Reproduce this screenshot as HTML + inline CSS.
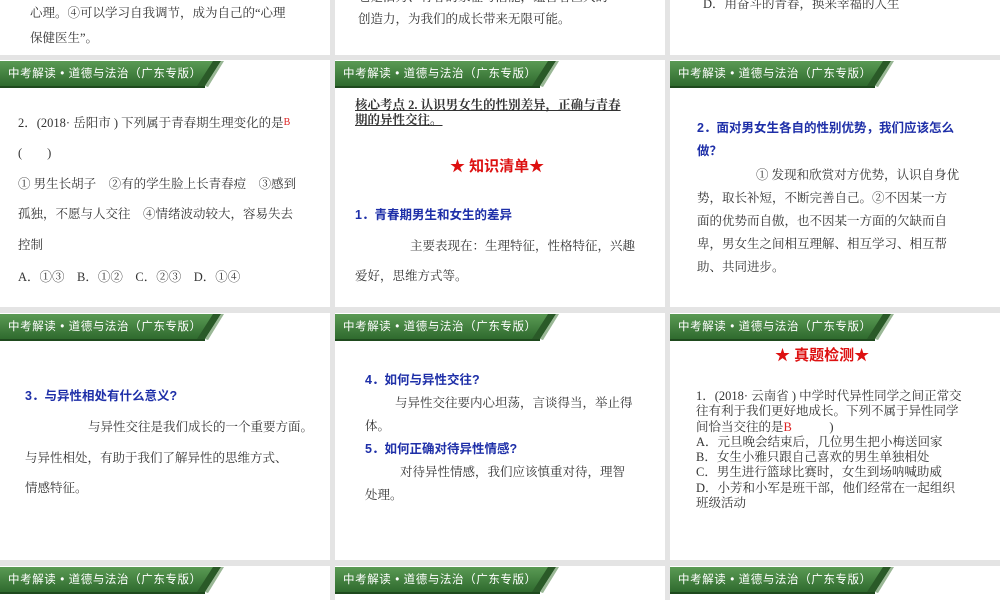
<!DOCTYPE html><html><head><meta charset="utf-8"><style>
body{margin:0;width:1000px;height:600px;background:#e4e4e4;position:relative;overflow:hidden;font-family:"Liberation Serif","Noto Serif CJK SC",serif;color:#333}
.s{position:absolute;background:#fff;width:330px;overflow:hidden}
.t{position:absolute;white-space:nowrap;font-size:12.5px;line-height:16px}
.b{color:#1e2fa8;font-weight:bold;font-family:"Liberation Sans","Noto Sans CJK SC",sans-serif}
.r{color:#d11;font-weight:bold;font-size:15px;font-family:"Liberation Sans","Noto Sans CJK SC",sans-serif}
.bn{position:absolute;left:0;top:1px}
.bt{position:absolute;left:8px;top:5px;color:#fff;font-size:11.5px;white-space:nowrap;letter-spacing:.6px;font-family:"Liberation Sans","Noto Sans CJK SC",sans-serif}
</style></head><body>
<div class="s" style="left:0;top:0;height:55px">
<div class="t" style="left:30px;top:5px">心理。④可以学习自我调节，成为自己的“心理</div>
<div class="t" style="left:30px;top:30px">保健医生”。</div></div>
<div class="s" style="left:335px;top:0;height:55px">
<div class="t" style="left:23px;top:-11px">它是活力、青春的象征与潜能，蕴含着巨大的</div>
<div class="t" style="left:23px;top:11px">创造力，为我们的成长带来无限可能。</div></div>
<div class="s" style="left:670px;top:0;height:55px">
<div class="t" style="left:33px;top:-4px">D．用奋斗的青春，换来幸福的人生</div></div>

<div class="s" style="left:0;top:60px;height:247px">
<div class="t" style="left:18px;top:55px">2．(2018· 岳阳市 ) 下列属于青春期生理变化的是<span style="color:#d22;font-size:10px;vertical-align:top">B</span></div>
<div class="t" style="left:18px;top:85px">(　　)</div>
<div class="t" style="left:18px;top:116px">① 男生长胡子　②有的学生脸上长青春痘　③感到</div>
<div class="t" style="left:18px;top:146px">孤独，不愿与人交往　④情绪波动较大，容易失去</div>
<div class="t" style="left:18px;top:177px">控制</div>
<div class="t" style="left:18px;top:209px">A．①③　B．①②　C．②③　D．①④</div></div>
<div class="s" style="left:335px;top:60px;height:247px">
<div class="t" style="left:20px;top:38px;font-weight:bold;text-decoration:underline;line-height:15px;font-size:12.5px">核心考点 2. 认识男女生的性别差异，正确与青春<br>期的异性交往。</div>
<div class="t r" style="left:115px;top:99px">★ 知识清单★</div>
<div class="t b" style="left:20px;top:147px">1．青春期男生和女生的差异</div>
<div class="t" style="left:75px;top:178px">主要表现在：生理特征，性格特征，兴趣</div>
<div class="t" style="left:20px;top:208px">爱好，思维方式等。</div></div>
<div class="s" style="left:670px;top:60px;height:247px">
<div class="t b" style="left:27px;top:60px">2．面对男女生各自的性别优势，我们应该怎么</div>
<div class="t b" style="left:27px;top:83px">做？</div>
<div class="t" style="left:86px;top:107px">① 发现和欣赏对方优势，认识自身优</div>
<div class="t" style="left:27px;top:130px">势，取长补短，不断完善自己。②不因某一方</div>
<div class="t" style="left:27px;top:153px">面的优势而自傲，也不因某一方面的欠缺而自</div>
<div class="t" style="left:27px;top:176px">卑，男女生之间相互理解、相互学习、相互帮</div>
<div class="t" style="left:27px;top:199px">助、共同进步。</div></div>

<div class="s" style="left:0;top:313px;height:247px">
<div class="t b" style="left:25px;top:75px">3．与异性相处有什么意义?</div>
<div class="t" style="left:88px;top:106px">与异性交往是我们成长的一个重要方面。</div>
<div class="t" style="left:25px;top:137px">与异性相处，有助于我们了解异性的思维方式、</div>
<div class="t" style="left:25px;top:167px">情感特征。</div></div>
<div class="s" style="left:335px;top:313px;height:247px">
<div class="t b" style="left:30px;top:59px">4．如何与异性交往?</div>
<div class="t" style="left:60px;top:82px">与异性交往要内心坦荡，言谈得当，举止得</div>
<div class="t" style="left:30px;top:105px">体。</div>
<div class="t b" style="left:30px;top:128px">5．如何正确对待异性情感?</div>
<div class="t" style="left:65px;top:151px">对待异性情感，我们应该慎重对待，理智</div>
<div class="t" style="left:30px;top:174px">处理。</div></div>
<div class="s" style="left:670px;top:313px;height:247px">
<div class="t r" style="left:105px;top:35px">★ 真题检测★</div>
<div class="t" style="left:26px;top:76px;font-size:12.5px;line-height:15.3px">1．(2018· 云南省 ) 中学时代异性同学之间正常交<br>往有利于我们更好地成长。下列不属于异性同学<br>间恰当交往的是<span style="color:#d22">B</span>　　　)<br>A．元旦晚会结束后，几位男生把小梅送回家<br>B．女生小雅只跟自己喜欢的男生单独相处<br>C．男生进行篮球比赛时，女生到场呐喊助威<br>D．小芳和小军是班干部，他们经常在一起组织<br>班级活动</div></div>

<div class="s" style="left:0;top:566px;height:34px"></div>
<div class="s" style="left:335px;top:566px;height:34px"></div>
<div class="s" style="left:670px;top:566px;height:34px"></div>

<script>
document.querySelectorAll('.s').forEach(function(s,i){
 if(i<3)return;
 var d=document.createElement('div');
 d.innerHTML='<svg class="bn" width="230" height="30"><defs><linearGradient id="g'+i+'" x1="0" y1="0" x2="0" y2="1"><stop offset="0" stop-color="#5a9a54"/><stop offset="1" stop-color="#2f6a2e"/></linearGradient></defs><polygon points="0,0 221,0 205,25 0,25" fill="url(#g'+i+')"/><polygon points="213,0 221,0 205,25 197,25" fill="#2a5a28"/><polygon points="221,0 224,0 208,26 205,25" fill="#9ab896"/><rect x="0" y="25" width="205" height="2" fill="#1f4a1e"/></svg><div class="bt">中考解读 • 道德与法治（广东专版）</div>';
 while(d.firstChild)s.appendChild(d.firstChild);
});
</script>
</body></html>
